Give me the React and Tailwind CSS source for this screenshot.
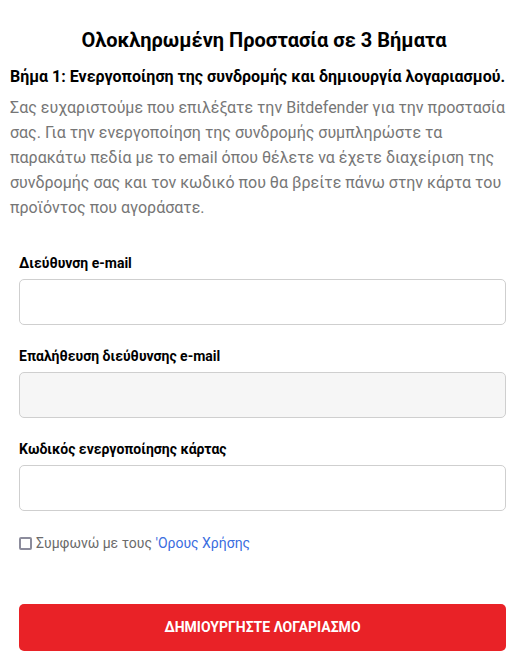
import React from 'react';

const Field = ({ label, muted, last }) => (
    <div className={last ? 'mb-[22px]' : 'mb-[21px]'}>
        <label className="block text-[14px] font-bold text-black leading-[20px] mb-[6px]">{label}</label>
        <input
            type="text"
            readOnly={muted}
            className={`block w-full h-[46px] rounded-[5px] border border-[#cfcfcf] outline-none ${muted ? 'bg-[#f6f6f6]' : 'bg-white'}`}
        />
    </div>
);

const App = () => {
    return (
        <div className="w-[528px] min-h-[657px] bg-white font-['Roboto',sans-serif]">
            {/* Intro */}
            <div className="px-[10px] pt-[26px]">
                <h1 className="text-center text-[20px] font-bold text-black leading-[28px]">
                    Ολοκληρωμένη Προστασία σε 3 Βήματα
                </h1>
                <h2 className="mt-[12px] text-[16px] font-bold text-black leading-[22px]">
                    Βήμα 1: Ενεργοποίηση της συνδρομής και δημιουργία λογαριασμού.
                </h2>
                <p className="mt-[7px] text-[16px] leading-[25px] text-[#767676]">
                    Σας ευχαριστούμε που επιλέξατε την Bitdefender για την προστασία σας. Για την ενεργοποίηση της συνδρομής συμπληρώστε τα παρακάτω πεδία με το email όπου θέλετε να έχετε διαχείριση της συνδρομής σας και τον κωδικό που θα βρείτε πάνω στην κάρτα του προϊόντος που αγοράσατε.
                </p>
            </div>

            {/* Form */}
            <form className="pl-[19px] pr-[22px] pt-[33px]">
                <Field label="Διεύθυνση e-mail" />
                <Field label="Επαλήθευση διεύθυνσης e-mail" muted />
                <Field label="Κωδικός ενεργοποίησης κάρτας" last />

                <label className="flex items-center gap-[4px] text-[14px] text-[#6b6b6b] leading-[20px]">
                    <span className="w-[13px] h-[13px] rounded-[2px] border-2 border-[#8c8c9c] bg-white shrink-0" />
                    <span>
                        Συμφωνώ με τους <a className="text-[#3a6de0]">'Ορους Χρήσης</a>
                    </span>
                </label>

                <button
                    type="button"
                    className="mt-[51px] w-full h-[47px] rounded-[5px] bg-[#e92227] text-white text-[14px] font-bold uppercase"
                >
                    ΔΗΜΙΟΥΡΓΗΣΤΕ ΛΟΓΑΡΙΑΣΜΟ
                </button>
            </form>
        </div>
    );
};

export default App;
